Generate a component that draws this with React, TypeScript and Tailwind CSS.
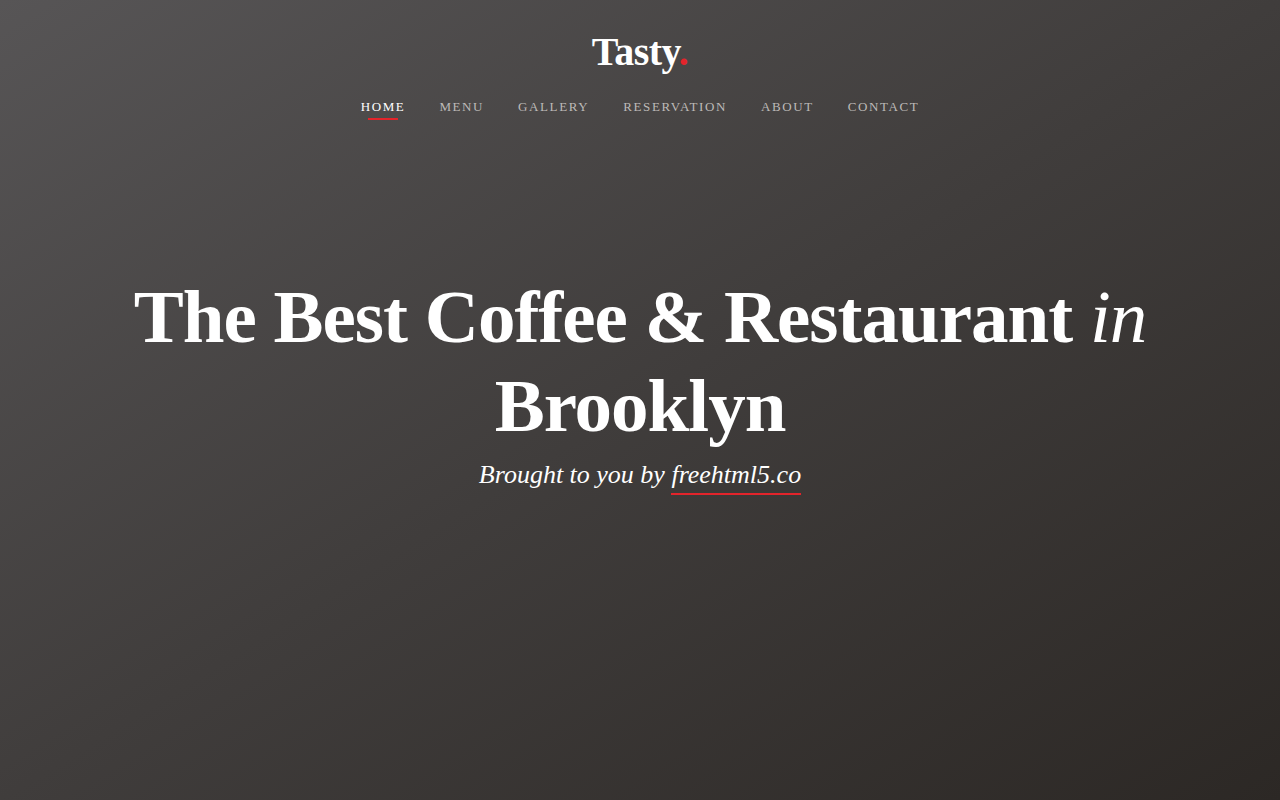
import React from 'react'

const serif = { fontFamily: '"Liberation Serif", "DejaVu Serif", serif' }

const links = ['Home', 'Menu', 'Gallery', 'Reservation', 'About', 'Contact']

const Nav: React.FC = () => (
  <header className="flex flex-col items-center pt-[28px]">
    <a href="#" className="text-[40px] leading-[48px] font-bold text-white tracking-[-0.5px]">
      Tasty<span className="text-[#e3242b]">.</span>
    </a>
    <nav className="mt-[21px]">
      <ul className="flex items-center gap-[34px]">
        {links.map((label, i) => (
          <li key={label} className="relative">
            <a
              href="#"
              className={
                'block text-[13px] leading-[20px] uppercase tracking-[1.6px] ' +
                (i === 0 ? 'text-white' : 'text-[#bdbab8]')
              }
            >
              {label}
            </a>
            {i === 0 && (
              <span className="absolute left-1/2 top-[21px] h-[2px] w-[30px] -translate-x-1/2 bg-[#e3242b]" />
            )}
          </li>
        ))}
      </ul>
    </nav>
  </header>
)

export default function App() {
  return (
    <div
      style={serif}
      className="h-[800px] w-full overflow-hidden bg-linear-to-br from-[#575556] via-[#403d3c] to-[#2c2825]"
    >
      <Nav />
      <section className="mt-[155px] flex flex-col items-center text-center">
        <h1 className="mx-auto max-w-[1100px] text-[75px] leading-[89px] font-bold text-white tracking-[-1px]">
          The Best Coffee &amp; Restaurant <em className="font-normal">in</em> Brooklyn
        </h1>
        <p className="mt-[7px] text-[26px] leading-[36px] italic text-white">
          Brought to you by{' '}
          <a href="#" className="relative inline-block">
            freehtml5.co
            <span className="absolute left-0 right-0 top-[36px] h-[2px] bg-[#e3242b]" />
          </a>
        </p>
      </section>
    </div>
  )
}
